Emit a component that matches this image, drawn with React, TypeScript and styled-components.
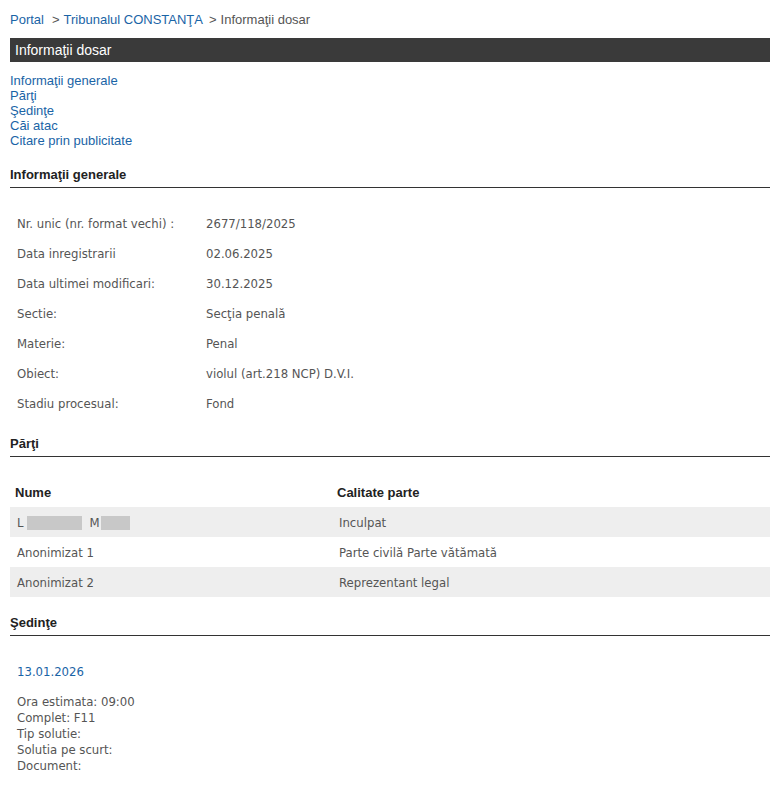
import React, { FC } from "react";
import styled, { createGlobalStyle } from "styled-components";

const GlobalStyle = createGlobalStyle`
  html, body {
    margin: 0;
    padding: 0;
    background: #ffffff;
  }
  body {
    font-family: "Liberation Sans", Arial, sans-serif;
  }
`;

// Local Data
const generalInfo: [string, string][] = [
  ["Nr. unic (nr. format vechi) :", "2677/118/2025"],
  ["Data inregistrarii", "02.06.2025"],
  ["Data ultimei modificari:", "30.12.2025"],
  ["Sectie:", "Secţia penală"],
  ["Materie:", "Penal"],
  ["Obiect:", "violul (art.218 NCP) D.V.I."],
  ["Stadiu procesual:", "Fond"],
];

const parties = [
  { name: null, role: "Inculpat" },
  { name: "Anonimizat 1", role: "Parte civilă Parte vătămată" },
  { name: "Anonimizat 2", role: "Reprezentant legal" },
];

const navLinks = [
  "Informaţii generale",
  "Părţi",
  "Şedinţe",
  "Căi atac",
  "Citare prin publicitate",
];

const App: FC = () => {
  return (
    <>
      <GlobalStyle />
      <Page>
        <Breadcrumb>
          <a href="#">Portal</a>
          <Sep $left={8}>&gt;</Sep>
          <a href="#">Tribunalul CONSTANŢA</a>
          <Sep $left={6}>&gt;</Sep>
          <span>Informaţii dosar</span>
        </Breadcrumb>

        <TitleBar>Informaţii dosar</TitleBar>

        <NavList>
          {navLinks.map((l) => (
            <a key={l} href="#">
              {l}
            </a>
          ))}
        </NavList>

        <SectionHeading $top={19}>Informaţii generale</SectionHeading>
        <InfoTable>
          <tbody>
            {generalInfo.map(([k, v]) => (
              <tr key={k}>
                <td>{k}</td>
                <td>{v}</td>
              </tr>
            ))}
          </tbody>
        </InfoTable>

        <SectionHeading $top={18}>Părţi</SectionHeading>
        <PartiesTable>
          <thead>
            <tr>
              <th>Nume</th>
              <th>Calitate parte</th>
            </tr>
          </thead>
          <tbody>
            {parties.map((p, i) => (
              <PartyRow key={i} $striped={i % 2 === 0}>
                <td>
                  {p.name ?? (
                    <>
                      L<Redacted $w={55} $l={3} $r={8} />M
                      <Redacted $w={29} $l={1} $r={0} />
                    </>
                  )}
                </td>
                <td>{p.role}</td>
              </PartyRow>
            ))}
          </tbody>
        </PartiesTable>

        <SectionHeading $top={18}>Şedinţe</SectionHeading>
        <Hearing>
          <HearingDate href="#">13.01.2026</HearingDate>
          <HearingDetails>
            <div>Ora estimata: 09:00</div>
            <div>Complet: F11</div>
            <div>Tip solutie:</div>
            <div>Solutia pe scurt:</div>
            <div>Document:</div>
          </HearingDetails>
        </Hearing>
      </Page>
    </>
  );
};

// Styled components
const Page = styled.div`
  width: 760px;
  padding: 12px 10px 20px 10px;
  a {
    color: #1a64a6;
    text-decoration: none;
  }
`;

const Breadcrumb = styled.div`
  font-size: 13px;
  line-height: 16px;
  color: #555555;
`;

const Sep = styled.span<{ $left: number }>`
  margin: 0 4px 0 ${(p) => p.$left}px;
  color: #555555;
`;

const TitleBar = styled.div`
  margin-top: 10px;
  height: 24px;
  padding-left: 5px;
  background: #3a3a3a;
  color: #ffffff;
  font-size: 14px;
  line-height: 24px;
`;

const NavList = styled.div`
  margin-top: 11px;
  display: flex;
  flex-direction: column;
  font-size: 13px;
  line-height: 15px;
`;

const SectionHeading = styled.h3<{ $top: number }>`
  margin: ${(p) => p.$top}px 0 0 0;
  padding-bottom: 4px;
  border-bottom: 1px solid #333333;
  font-size: 13px;
  line-height: 16px;
  font-weight: bold;
  color: #222222;
`;

const dataFont = `
  font-family: "DejaVu Sans Condensed", "DejaVu Sans", Tahoma, sans-serif;
  font-size: 13px;
  color: #555555;
`;

const InfoTable = styled.table`
  margin-top: 20px;
  border-collapse: collapse;
  ${dataFont}
  td {
    height: 30px;
    padding: 0 0 0 7px;
    vertical-align: middle;
  }
  td:first-child {
    width: 182px;
  }
`;

const PartiesTable = styled.table`
  margin-top: 20px;
  width: 100%;
  border-collapse: collapse;
  ${dataFont}
  th {
    height: 30px;
    text-align: left;
    padding: 0 0 0 5px;
    font-family: "Liberation Sans", Arial, sans-serif;
    font-size: 13px;
    font-weight: bold;
    color: #222222;
  }
  th:first-child,
  td:first-child {
    width: 315px;
  }
  td {
    height: 30px;
    padding: 0 0 0 7px;
  }
`;

const PartyRow = styled.tr<{ $striped: boolean }>`
  background: ${(p) => (p.$striped ? "#eeeeee" : "#ffffff")};
`;

const Redacted = styled.span<{ $w: number; $l: number; $r: number }>`
  display: inline-block;
  width: ${(p) => p.$w}px;
  height: 14px;
  margin: 0 ${(p) => p.$r}px 0 ${(p) => p.$l}px;
  vertical-align: -3px;
  background: #c8c8c8;
`;

const Hearing = styled.div`
  padding: 28px 0 0 7px;
  ${dataFont}
`;

const HearingDate = styled.a`
  display: block;
  line-height: 16px;
`;

const HearingDetails = styled.div`
  margin-top: 14px;
  line-height: 16px;
`;

export default App;
